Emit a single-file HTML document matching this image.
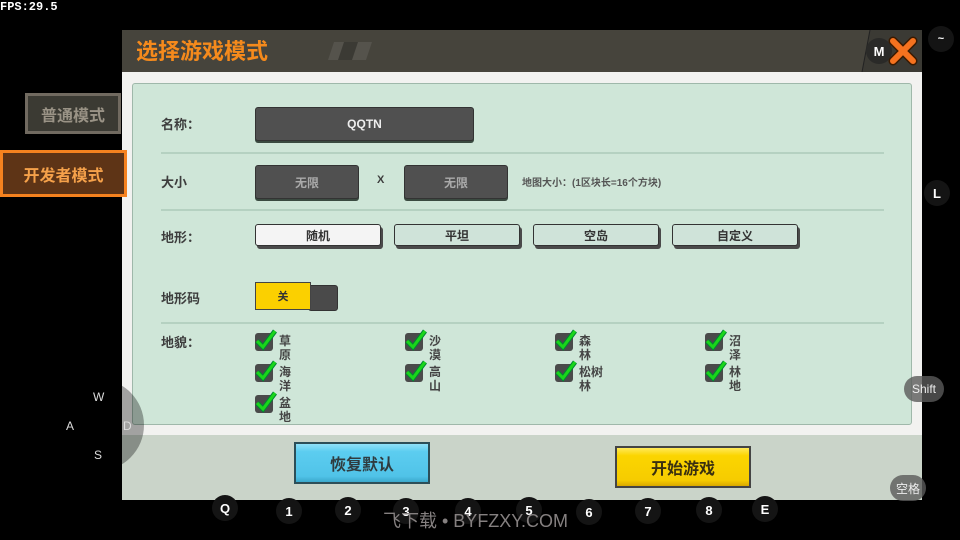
<!DOCTYPE html>
<html><head><meta charset="utf-8"><style>
*{margin:0;padding:0;box-sizing:border-box}
body{width:960px;height:540px;background:#000;position:relative;overflow:hidden;font-family:"Liberation Sans","Noto Sans CJK SC",sans-serif;font-weight:bold}
.a{position:absolute}
.lbl{position:absolute;font-size:13px;color:#3d3d3d;}
.inp{position:absolute;background:#505050;border:1px solid #333;border-radius:3px;color:#aaa;font-size:12px;display:flex;align-items:center;justify-content:center;box-shadow:0 2px 0 #3a4a40}
.div{position:absolute;left:161px;width:723px;height:2px;background:#b5d1c1}
.tb{position:absolute;top:224px;width:126px;height:22px;border:1px solid #333;border-radius:3px;background:#cfe3d9;font-size:12px;color:#333;display:flex;align-items:center;justify-content:center;box-shadow:2px 3px 0 #4a4a4a}
.cb{position:absolute;width:18px;height:18px;background:#4a4a4a;border-radius:3px}
.cb svg{position:absolute;left:-1px;top:-5px}
.ct{position:absolute;font-size:12px;color:#444;line-height:14px;width:30px}
.k{position:absolute;width:26px;height:26px;border-radius:13px;background:#141414;color:#fff;font-size:13px;display:flex;align-items:center;justify-content:center}
</style></head><body>
<div class="a" style="left:0;top:0;color:#fff;font-family:'Liberation Mono',monospace;font-size:12px">FPS:29.5</div>
<div class="a" style="left:122px;top:72px;width:800px;height:428px;background:#f2f2f0"></div>
<div class="a" style="left:122px;top:435px;width:800px;height:65px;background:#cad4c9"></div>
<div class="a" style="left:122px;top:30px;width:800px;height:42px;background:#46443c"></div>
<svg class="a" style="left:122px;top:30px" width="800" height="42"><polygon points="212,12 250,12 244,30 206,30" fill="#55534c"/><polygon points="222,12 236,12 230,30 216,30" fill="#3b3a34"/><polygon points="748,0 800,0 800,42 740,42" fill="#3b3a34"/><line x1="748" y1="0" x2="740" y2="42" stroke="#222" stroke-width="1"/></svg>
<div class="a" style="left:136px;top:34px;font-size:22px;color:#f58a1c">选择游戏模式</div>
<div class="k" style="left:866px;top:38px;background:#2a2a28">M</div>
<svg class="a" style="left:888px;top:36px" width="30" height="30"><path d="M5 5 L25 25 M25 5 L5 25" stroke="#3a1a00" stroke-width="9" stroke-linecap="round"/><path d="M5 5 L25 25 M25 5 L5 25" stroke="#f5721f" stroke-width="6" stroke-linecap="round"/></svg>
<div class="k" style="left:928px;top:26px;font-size:11px">~</div>
<div class="k" style="left:924px;top:180px">L</div>
<div class="a" style="left:25px;top:93px;width:96px;height:41px;background:#3b3a33;border:3px solid #716a60;color:#9a9386;font-size:16px;display:flex;align-items:center;justify-content:center">普通模式</div>
<div class="a" style="left:0;top:150px;width:127px;height:47px;background:#5e3416;border:3px solid #f5821f;color:#f5a14a;font-size:16px;display:flex;align-items:center;justify-content:center">开发者模式</div>
<div class="a" style="left:132px;top:83px;width:780px;height:342px;background:#cfe6d8;border:1px solid #9fb8aa;border-radius:3px"></div>
<div class="lbl" style="left:161px;top:114px">名称：</div>
<div class="inp" style="left:255px;top:107px;width:219px;height:34px;color:#eee">QQTN</div>
<div class="div" style="top:152px"></div>
<div class="lbl" style="left:161px;top:172px">大小</div>
<div class="inp" style="left:255px;top:165px;width:104px;height:34px">无限</div>
<div class="lbl" style="left:377px;top:174px;font-size:11px">X</div>
<div class="inp" style="left:404px;top:165px;width:104px;height:34px">无限</div>
<div class="lbl" style="left:522px;top:174px;font-size:10px;color:#555">地图大小：(1区块长=16个方块)</div>
<div class="div" style="top:209px"></div>
<div class="lbl" style="left:161px;top:227px">地形：</div>
<div class="tb" style="left:255px;background:#f4f4f4">随机</div>
<div class="tb" style="left:394px">平坦</div>
<div class="tb" style="left:533px">空岛</div>
<div class="tb" style="left:672px">自定义</div>
<div class="lbl" style="left:161px;top:288px">地形码</div>
<div class="a" style="left:308px;top:285px;width:30px;height:26px;background:#4a4a4a;border:1px solid #333;border-radius:3px"></div>
<div class="a" style="left:255px;top:282px;width:56px;height:28px;background:#fbd000;border:1px solid #444;font-size:11px;color:#333;display:flex;align-items:center;justify-content:center">关</div>
<div class="div" style="top:322px"></div>
<div class="lbl" style="left:161px;top:332px">地貌：</div>
<div class="cb" style="left:255px;top:333px"><svg width="24" height="24"><path d="M3 13 L9 19 L21 3" stroke="#083" stroke-width="5" fill="none"/><path d="M3 13 L9 19 L21 3" stroke="#1ad61a" stroke-width="3" fill="none"/></svg></div><div class="ct" style="left:279px;top:334px">草<br>原</div>
<div class="cb" style="left:255px;top:364px"><svg width="24" height="24"><path d="M3 13 L9 19 L21 3" stroke="#083" stroke-width="5" fill="none"/><path d="M3 13 L9 19 L21 3" stroke="#1ad61a" stroke-width="3" fill="none"/></svg></div><div class="ct" style="left:279px;top:365px">海<br>洋</div>
<div class="cb" style="left:255px;top:395px"><svg width="24" height="24"><path d="M3 13 L9 19 L21 3" stroke="#083" stroke-width="5" fill="none"/><path d="M3 13 L9 19 L21 3" stroke="#1ad61a" stroke-width="3" fill="none"/></svg></div><div class="ct" style="left:279px;top:396px">盆<br>地</div>
<div class="cb" style="left:405px;top:333px"><svg width="24" height="24"><path d="M3 13 L9 19 L21 3" stroke="#083" stroke-width="5" fill="none"/><path d="M3 13 L9 19 L21 3" stroke="#1ad61a" stroke-width="3" fill="none"/></svg></div><div class="ct" style="left:429px;top:334px">沙<br>漠</div>
<div class="cb" style="left:405px;top:364px"><svg width="24" height="24"><path d="M3 13 L9 19 L21 3" stroke="#083" stroke-width="5" fill="none"/><path d="M3 13 L9 19 L21 3" stroke="#1ad61a" stroke-width="3" fill="none"/></svg></div><div class="ct" style="left:429px;top:365px">高<br>山</div>
<div class="cb" style="left:555px;top:333px"><svg width="24" height="24"><path d="M3 13 L9 19 L21 3" stroke="#083" stroke-width="5" fill="none"/><path d="M3 13 L9 19 L21 3" stroke="#1ad61a" stroke-width="3" fill="none"/></svg></div><div class="ct" style="left:579px;top:334px">森<br>林</div>
<div class="cb" style="left:555px;top:364px"><svg width="24" height="24"><path d="M3 13 L9 19 L21 3" stroke="#083" stroke-width="5" fill="none"/><path d="M3 13 L9 19 L21 3" stroke="#1ad61a" stroke-width="3" fill="none"/></svg></div><div class="ct" style="left:579px;top:365px">松树<br>林</div>
<div class="cb" style="left:705px;top:333px"><svg width="24" height="24"><path d="M3 13 L9 19 L21 3" stroke="#083" stroke-width="5" fill="none"/><path d="M3 13 L9 19 L21 3" stroke="#1ad61a" stroke-width="3" fill="none"/></svg></div><div class="ct" style="left:729px;top:334px">沼<br>泽</div>
<div class="cb" style="left:705px;top:364px"><svg width="24" height="24"><path d="M3 13 L9 19 L21 3" stroke="#083" stroke-width="5" fill="none"/><path d="M3 13 L9 19 L21 3" stroke="#1ad61a" stroke-width="3" fill="none"/></svg></div><div class="ct" style="left:729px;top:365px">林<br>地</div>
<div class="a" style="left:294px;top:442px;width:136px;height:42px;background:linear-gradient(#8fe0f8 0,#5ccdf0 20%,#50c3e8 85%,#3aa8cc 100%);border:2px solid #2c4e58;color:#2f3b3f;font-size:16px;display:flex;align-items:center;justify-content:center">恢复默认</div>
<div class="a" style="left:615px;top:446px;width:136px;height:42px;background:linear-gradient(#ffe95a 0,#fbd500 20%,#f6cc00 85%,#d9a800 100%);border:2px solid #444;color:#3a3010;font-size:16px;display:flex;align-items:center;justify-content:center">开始游戏</div>
<div class="a" style="left:52px;top:379px;width:92px;height:92px;border-radius:46px;background:rgba(0,0,0,.33)"></div>
<div class="a" style="left:93px;top:390px;color:#ddd;font-size:12px;font-weight:normal">W</div>
<div class="a" style="left:66px;top:419px;color:#ddd;font-size:12px;font-weight:normal">A</div>
<div class="a" style="left:94px;top:448px;color:#ddd;font-size:12px;font-weight:normal">S</div>
<div class="a" style="left:123px;top:419px;color:#ddd;font-size:12px;font-weight:normal">D</div>
<div class="a" style="left:904px;top:376px;width:40px;height:26px;border-radius:13px;background:rgba(90,90,90,.8);color:#eee;font-size:12px;font-weight:normal;display:flex;align-items:center;justify-content:center">Shift</div>
<div class="a" style="left:890px;top:475px;width:36px;height:26px;border-radius:13px;background:rgba(90,90,90,.8);color:#eee;font-size:12px;font-weight:normal;display:flex;align-items:center;justify-content:center">空格</div>
<div class="k" style="left:212px;top:495px">Q</div>
<div class="k" style="left:276px;top:498px">1</div>
<div class="k" style="left:335px;top:497px">2</div>
<div class="k" style="left:393px;top:498px">3</div>
<div class="k" style="left:455px;top:498px">4</div>
<div class="k" style="left:516px;top:497px">5</div>
<div class="k" style="left:576px;top:499px">6</div>
<div class="k" style="left:635px;top:498px">7</div>
<div class="k" style="left:696px;top:497px">8</div>
<div class="k" style="left:752px;top:496px">E</div>
<div class="a" style="left:383px;top:507px;color:#858080;font-size:18px;font-weight:normal">飞下载 • BYFZXY.COM</div>
</body></html>
